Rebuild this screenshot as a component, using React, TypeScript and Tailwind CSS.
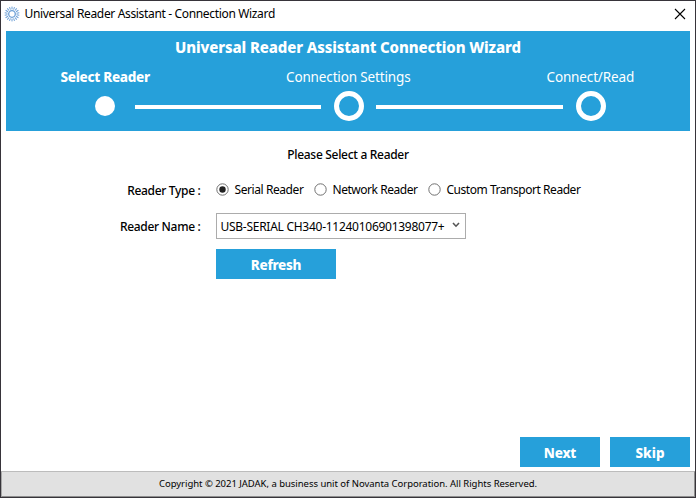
import type { ReactNode } from "react";

function SunIcon() {
  const rays = Array.from({ length: 18 }, (_, i) => i * 20);
  return (
    <svg width="16" height="16" viewBox="-8 -8 16 16" fill="none" stroke="#6c9fd6">
      <circle r="3.3" strokeWidth="1.3" />
      {rays.map((angle) => (
        <line key={angle} x1="0" y1="-4.6" x2="0" y2="-7.4" strokeWidth="1" transform={`rotate(${angle})`} />
      ))}
    </svg>
  );
}

function Radio({ checked, label, className }: { checked?: boolean; label: string; className: string }) {
  return (
    <label className="flex items-center gap-[6px]">
      <svg className="mb-[2px]" width="13" height="13" viewBox="0 0 13 13">
        <circle cx="6.5" cy="6.5" r="5.7" fill="#fff" stroke="#707070" />
        {checked && <circle cx="6.5" cy="6.5" r="3.2" fill="#212121" />}
      </svg>
      <span className={`text-[12px] leading-4 ${className}`}>{label}</span>
    </label>
  );
}

function Button({ children, className }: { children: ReactNode; className: string }) {
  return (
    <button
      className={`flex h-[30px] shrink-0 items-center justify-center bg-[#26a0da] pt-0.5 text-[13.5px] leading-5 font-extrabold text-white ${className}`}
    >
      {children}
    </button>
  );
}

function Ring() {
  return <span className="h-[30px] w-[30px] shrink-0 rounded-full border-[5px] border-white" />;
}

export default function App() {
  return (
    <div className="flex h-[498px] w-[696px] flex-col overflow-hidden border border-[#37343a] bg-white font-['Noto_Sans','Open_Sans',sans-serif] whitespace-nowrap text-black">
      <header className="flex h-[30px] shrink-0 items-center pr-[9px] pb-[5px] pl-[3px]">
        <SunIcon />
        <h1 className="ml-[4.5px] text-[12px] leading-4 tracking-[-0.34px]">
          Universal Reader Assistant - Connection Wizard
        </h1>
        <svg className="ml-auto" width="12" height="12" viewBox="0 0 12 12" stroke="#000" strokeWidth="1.1">
          <path d="M1 1 11 11M11 1 1 11" />
        </svg>
      </header>

      <section className="mx-[5px] flex h-[100px] shrink-0 flex-col bg-[#26a0da] text-white">
        <h2 className="mt-[6px] text-center text-[15px] leading-5 font-extrabold tracking-[-0.12px]">
          Universal Reader Assistant Connection Wizard
        </h2>
        <div className="mt-[10px] flex h-5 text-[13.5px] leading-5">
          <span className="ml-[54.5px] w-[91px] font-extrabold tracking-[-0.3px]">Select Reader</span>
          <span className="ml-[134.5px] w-[127px] tracking-[-0.14px]">Connection Settings</span>
          <span className="ml-[133.5px] tracking-[-0.14px]">Connect/Read</span>
        </div>
        <div className="mt-[4px] flex h-[30px] items-center">
          <span className="ml-[89px] h-5 w-5 shrink-0 rounded-full bg-white" />
          <span className="mt-[2px] ml-5 h-[4px] w-[186px] bg-white" />
          <span className="w-[13px]" />
          <Ring />
          <span className="mt-[2px] ml-3 h-[4px] w-[187px] bg-white" />
          <span className="w-[13px]" />
          <Ring />
        </div>
      </section>

      <main className="flex flex-1 flex-col">
        <p className="mt-[16px] text-center text-[12px] leading-4 font-medium tracking-[-0.3px]">
          Please Select a Reader
        </p>
        <div className="mt-[17px] flex h-5 items-center">
          <span className="mt-[2px] w-[199.5px] text-right text-[12px] leading-4 font-medium tracking-[-0.32px]">
            Reader Type :
          </span>
          <div className="ml-[15px] flex items-center gap-[10px]">
            <Radio checked label="Serial Reader" className="w-[69px] tracking-[-0.42px]" />
            <Radio label="Network Reader" className="w-[85px] tracking-[-0.46px]" />
            <Radio label="Custom Transport Reader" className="tracking-[-0.46px]" />
          </div>
        </div>
        <div className="mt-[13px] flex h-[26px] items-center">
          <span className="mt-[2px] w-[199.5px] text-right text-[12px] leading-4 font-medium tracking-[-0.32px]">
            Reader Name :
          </span>
          <div className="ml-[15.5px] flex h-[26px] w-[250px] items-center justify-between border border-[#acacac] pr-[5px] pl-[3.5px]">
            <span className="pt-px text-[12px] leading-4 tracking-[-0.27px]">USB-SERIAL CH340-11240106901398077+</span>
            <svg className="mb-[3px]" width="8" height="6" viewBox="0 0 8 6" fill="none" stroke="#555" strokeWidth="1.6">
              <path d="M1 1 4 4.2 7 1" />
            </svg>
          </div>
        </div>
        <Button className="mt-[10px] ml-[215px] w-[120px] tracking-[-0.3px]">Refresh</Button>
        <div className="mt-auto mr-[5px] mb-[4px] flex justify-end gap-[10px]">
          <Button className="w-20 tracking-[-0.2px]">Next</Button>
          <Button className="w-20">Skip</Button>
        </div>
      </main>

      <footer className="flex h-[26px] shrink-0 items-center justify-center border border-t-[#bcbcbc] border-r-[#8e8e8e] border-b-[#8e8e8e] border-l-[#a8a8a8] bg-[#e1e1e1] text-[9.5px] leading-4 tracking-[-0.03px]">
        Copyright © 2021 JADAK, a business unit of Novanta Corporation. All Rights Reserved.
      </footer>
    </div>
  );
}
